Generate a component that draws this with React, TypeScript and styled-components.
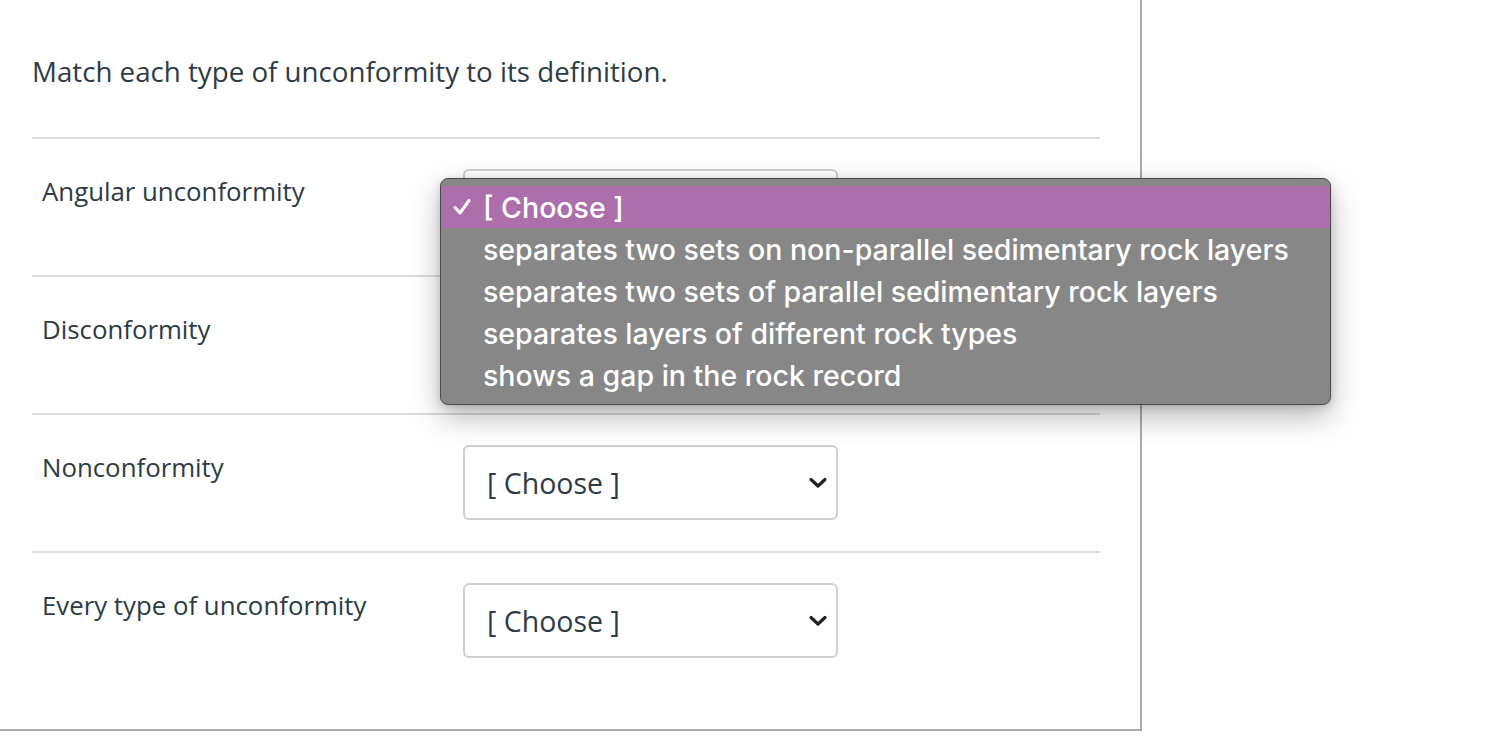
import React from 'react';
import styled, { createGlobalStyle } from 'styled-components';

const GlobalStyle = createGlobalStyle`
  html, body {
    margin: 0;
    padding: 0;
    background: #fff;
  }
  body {
    font-family: "Open Sans", Lato, sans-serif;
    color: #2d3b45;
  }
`;

const OPTIONS = [
  '[ Choose ]',
  'separates two sets on non-parallel sedimentary rock layers',
  'separates two sets of parallel sedimentary rock layers',
  'separates layers of different rock types',
  'shows a gap in the rock record',
];

const TERMS = ['Angular unconformity', 'Disconformity', 'Nonconformity', 'Every type of unconformity'];

const Chevron = () => (
  <svg width="20" height="14" viewBox="0 0 20 14" fill="none">
    <path d="M3 3.5 L10 10 L17 3.5" stroke="#222" strokeWidth="3.2" strokeLinecap="round" strokeLinejoin="round" />
  </svg>
);

const Check = () => (
  <svg width="22" height="22" viewBox="0 0 22 22" fill="none">
    <path d="M4 11.5 L9 17 L18 4.5" stroke="#fff" strokeWidth="3" strokeLinecap="round" strokeLinejoin="round" />
  </svg>
);

export default function App() {
  return (
    <>
      <GlobalStyle />
      <Panel>
        <Question>Match each type of unconformity to its definition.</Question>
        {TERMS.map((term, i) => (
          <Row key={term} $last={i === TERMS.length - 1}>
            <Term>{term}</Term>
            <SelectWrap>
              <SelectBox>
                <span>[ Choose ]</span>
                <Chevron />
              </SelectBox>
              {i === 0 && (
                <Menu>
                  {OPTIONS.map((opt, j) => (
                    <MenuItem key={opt} $active={j === 0}>
                      <CheckSlot>{j === 0 && <Check />}</CheckSlot>
                      {opt}
                    </MenuItem>
                  ))}
                </Menu>
              )}
            </SelectWrap>
          </Row>
        ))}
      </Panel>
    </>
  );
}

const Panel = styled.div`
  box-sizing: border-box;
  width: 1142px;
  height: 731px;
  padding: 0 40px 0 32px;
  border-right: 2px solid #aaa;
  border-bottom: 2px solid #aaa;
`;

const Question = styled.p`
  margin: 0;
  height: 137px;
  padding-top: 51px;
  box-sizing: border-box;
  font-size: 27.7px;
  line-height: 40px;
  color: #2d3b45;
`;

const Row = styled.div<{ $last: boolean }>`
  display: flex;
  align-items: flex-start;
  height: ${(p) => (p.$last ? '178px' : '138px')};
  padding-top: 30px;
  box-sizing: border-box;
  border-top: 2px solid #dcdcdc;
`;

const Term = styled.div`
  width: 421px;
  padding-left: 10px;
  font-size: 25.8px;
  line-height: 44px;
  color: #2d3b45;
`;

const SelectWrap = styled.div`
  position: relative;
`;

const SelectBox = styled.div`
  box-sizing: border-box;
  width: 375px;
  height: 75px;
  padding: 0 8px 0 22px;
  display: flex;
  align-items: center;
  justify-content: space-between;
  border: 2px solid #cfcfcf;
  border-radius: 6px;
  background: #fff;
  font-size: 28.5px;
  color: #2d3b45;
`;

const Menu = styled.div`
  position: absolute;
  top: 9px;
  left: -23px;
  z-index: 5;
  box-sizing: border-box;
  width: 891px;
  height: 227px;
  padding: 7px 0;
  background: #878787;
  border: 1px solid #4a4a4a;
  border-radius: 8px;
  box-shadow: 0 12px 30px rgba(0, 0, 0, 0.28), 0 2px 8px rgba(0, 0, 0, 0.15);
`;

const MenuItem = styled.div<{ $active: boolean }>`
  display: flex;
  align-items: center;
  height: 42px;
  background: ${(p) => (p.$active ? '#ad6fac' : 'transparent')};
  font-family: Inter, "Liberation Sans", sans-serif;
  font-size: 28.5px;
  font-weight: 500;
  color: #fff;
  white-space: nowrap;
`;

const CheckSlot = styled.span`
  display: inline-flex;
  justify-content: center;
  width: 42px;
`;
